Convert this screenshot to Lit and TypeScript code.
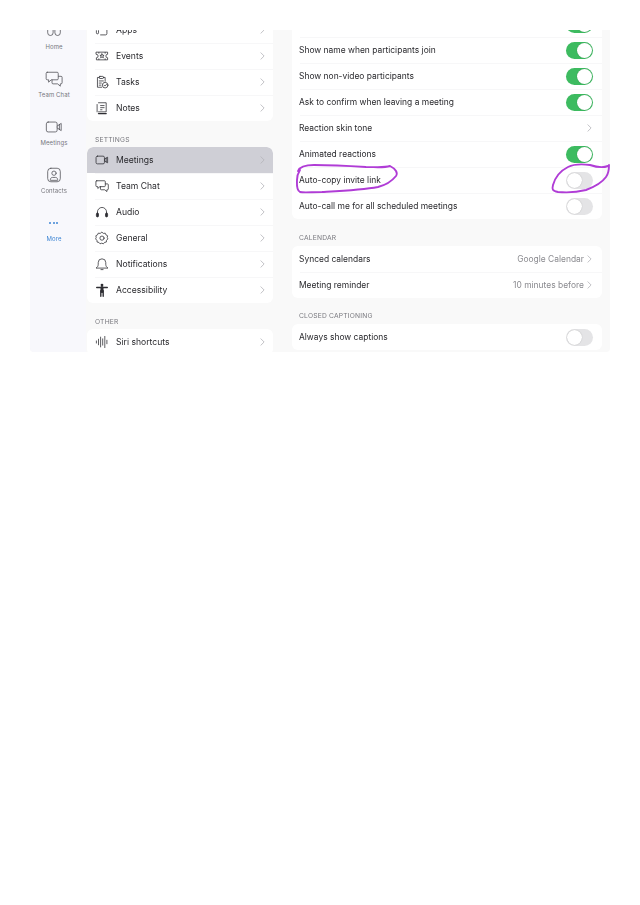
import { LitElement, html, css, svg } from 'lit';
import { customElement } from 'lit/decorators.js';

// 20x20 line icons used in the rail and in the settings list
const icons: Record<string, unknown> = {
  home: svg`<path d="M3 1v11a3 3 0 0 0 6 0V6a1 1 0 0 1 2 0v6a3 3 0 0 0 6 0V1"/>`,
  chat: svg`<path d="M2.5 2.5h11a1.2 1.2 0 0 1 1.2 1.2v6a1.2 1.2 0 0 1-1.2 1.2H7l-3 2.6v-2.6H2.5a1.2 1.2 0 0 1-1.2-1.2v-6a1.2 1.2 0 0 1 1.2-1.2z"/><path d="M15 7h2.8A1.2 1.2 0 0 1 19 8.2v6a1.2 1.2 0 0 1-1.2 1.2H17v2.6l-3-2.6H9a1.2 1.2 0 0 1-1.2-1.2V11"/>`,
  video: svg`<rect x="1.5" y="4.5" width="12" height="11" rx="2"/><path d="M13.5 9l4.5-3v8l-4.5-3"/><path d="M16 7v6"/>`,
  contact: svg`<rect x="3" y="2.5" width="14" height="15" rx="3.5"/><circle cx="10" cy="8" r="2.4"/><path d="M6 15.5v-.6c0-1.4 1.2-2.2 2.2-2.2h3.6c1 0 2.2.8 2.2 2.2v.6z"/>`,
  apps: svg`<path d="M2 11v3a1.5 1.5 0 0 0 3 0v-3"/><path d="M8 17h7a2 2 0 0 0 2-2V3"/>`,
  events: svg`<path d="M2 4.5h16v3a2.5 2.5 0 0 0 0 5v3H2v-3a2.5 2.5 0 0 0 0-5z"/><path d="M10 7l1 2h2l-1.6 1.4.6 2.1-2-1.2-2 1.2.6-2.1L7 9h2z"/><path d="M14.5 5v1M14.5 14v1M5.5 5v1M5.5 14v1"/>`,
  tasks: svg`<path d="M6 3.5H3.5v14h6"/><path d="M12 3.5h2.5V9"/><rect x="6" y="2" width="6" height="3" rx="1"/><path d="M6 8.5h6M6 11.5h3M6 14.5h2.5"/><circle cx="14.5" cy="14.5" r="4"/><path d="M12.8 14.5l1.3 1.3 2.3-2.4"/>`,
  notes: svg`<path d="M5 2.5h11v13H5"/><path d="M3 5v10.5"/><path d="M8 6.5h5M8 9.5h5M8 12.5h2"/><path d="M5 18h11" stroke-width="2"/>`,
  audio: svg`<path d="M3.5 12.5V10a6.5 6.5 0 0 1 13 0v2.5"/><rect x="2" y="11.5" width="3" height="5.5" rx="1.4" fill="currentColor"/><rect x="15" y="11.5" width="3" height="5.5" rx="1.4" fill="currentColor"/>`,
  general: svg`<path d="M10 1.8l2 1.6 2.6-.3 1 2.4 2.4 1.3-.5 2.6.9 1.9-1.9 1.9-.3 2.6-2.6.5-1.6 2-2.4-.9-2.4.9-1.6-2-2.6-.5-.3-2.6-1.9-1.9.9-1.9-.5-2.6 2.4-1.3 1-2.4 2.6.3z"/><circle cx="10" cy="10.2" r="3"/>`,
  bell: svg`<path d="M2 15.5c1.6-1.2 2.6-2.6 2.6-5.2V8a5.4 5.4 0 0 1 10.8 0v2.3c0 2.6 1 4 2.6 5.2z"/><path d="M8.5 18h3"/>`,
  access: svg`<circle cx="10" cy="3" r="2" fill="currentColor" stroke="none"/><path d="M2.5 6.5h15" stroke-width="2.2"/><path d="M10 6.5V12" stroke-width="4.4"/><path d="M8.3 11v8M11.7 11v8" stroke-width="2"/>`,
  siri: svg`<path d="M2 8.5v3M5 6v8M8 3v14M11 5.5v9M14 2v16M17 7.5v5"/>`,
};

const icon = (name: string) =>
  html`<svg class="icon" viewBox="0 0 20 20" fill="none" stroke="currentColor" stroke-width="1.1" stroke-linecap="round" stroke-linejoin="round">${icons[name]}</svg>`;

const chevron = html`<svg class="chev" viewBox="0 0 6 10" fill="none" stroke="currentColor" stroke-width="1" stroke-linecap="round" stroke-linejoin="round"><path d="M1 1l4 4-4 4"/></svg>`;

const toggle = (on: boolean) => html`<span class="toggle ${on ? 'on' : ''}"><span class="knob"></span></span>`;

const rail = [
  { icon: 'home', label: 'Home' },
  { icon: 'chat', label: 'Team Chat' },
  { icon: 'video', label: 'Meetings' },
  { icon: 'contact', label: 'Contacts' },
];

const navTop = [
  { icon: 'apps', label: 'Apps' },
  { icon: 'events', label: 'Events' },
  { icon: 'tasks', label: 'Tasks' },
  { icon: 'notes', label: 'Notes' },
];
const navSettings = [
  { icon: 'video', label: 'Meetings', active: true },
  { icon: 'chat', label: 'Team Chat' },
  { icon: 'audio', label: 'Audio' },
  { icon: 'general', label: 'General' },
  { icon: 'bell', label: 'Notifications' },
  { icon: 'access', label: 'Accessibility' },
];
const navOther = [{ icon: 'siri', label: 'Siri shortcuts' }];

type Row = { label: string; on?: boolean; value?: string };

const meetingRows: Row[] = [
  { label: '', on: true }, // scrolled away, only its toggle still shows
  { label: 'Show name when participants join', on: true },
  { label: 'Show non-video participants', on: true },
  { label: 'Ask to confirm when leaving a meeting', on: true },
  { label: 'Reaction skin tone' },
  { label: 'Animated reactions', on: true },
  { label: 'Auto-copy invite link', on: false },
  { label: 'Auto-call me for all scheduled meetings', on: false },
];
const calendarRows: Row[] = [
  { label: 'Synced calendars', value: 'Google Calendar' },
  { label: 'Meeting reminder', value: '10 minutes before' },
];
const captionRows: Row[] = [{ label: 'Always show captions', on: false }];

@customElement('app-root')
export class AppRoot extends LitElement {
  static styles = css`
    :host {
      display: block;
      height: 905px;
      background: #fff;
      font-family: Inter, 'Liberation Sans', sans-serif;
      color: #2a2a2e;
    }
    .page {
      position: relative;
      padding: 30px 30px 0;
      filter: blur(0.45px);
    }
    .frame {
      display: flex;
      height: 322px;
      background: #f9f9f9;
      border-radius: 0 0 4px 4px;
      overflow: hidden;
    }
    .rail {
      width: 56px;
      flex: none;
      box-sizing: border-box;
      padding-right: 8px;
      background: #f8f8fc;
      display: flex;
      flex-direction: column;
      align-items: center;
      margin-top: -8px;
    }
    .rail-item {
      height: 48px;
      flex: none;
      display: flex;
      flex-direction: column;
      align-items: center;
      color: #77777d;
      font-size: 6px;
      line-height: 8px;
      letter-spacing: 0.1px;
    }
    .rail-item .icon {
      width: 18px;
      height: 18px;
      margin-bottom: 3px;
      color: #55555b;
      stroke-width: 0.9;
    }
    .rail-item.more {
      color: #3f86d4;
    }
    .dots {
      height: 18px;
      margin-bottom: 3px;
      display: flex;
      gap: 1.5px;
      align-items: center;
    }
    .dots i {
      width: 2px;
      height: 2px;
      border-radius: 50%;
      background: #3f86d4;
    }
    .nav {
      width: 186px;
      flex: none;
      margin-left: 1px;
    }
    .main {
      width: 310px;
      flex: none;
      margin-left: 19px;
    }
    .card {
      background: #fff;
      border-radius: 6px;
      overflow: hidden;
    }
    .nav > .card:first-child {
      margin-top: -13px;
      border-radius: 0 0 6px 6px;
    }
    .main > .card:first-child {
      margin-top: -19px;
      border-radius: 0 0 6px 6px;
    }
    .section {
      height: 26px;
      box-sizing: border-box;
      display: flex;
      align-items: flex-end;
      font-size: 6.7px;
      line-height: 8px;
      letter-spacing: 0.2px;
      color: #77777d;
      text-transform: uppercase;
    }
    .nav .section {
      padding: 0 0 3.5px 8px;
    }
    .main .section {
      padding: 0 0 4px 7px;
    }
    .main .card:first-child + .section {
      height: 27px;
    }
    .row {
      height: 26px;
      box-sizing: border-box;
      display: flex;
      align-items: center;
      font-size: 8.6px;
      position: relative;
    }
    .nav .row {
      padding: 0 8px;
      gap: 7px;
    }
    .nav .row .icon {
      width: 14px;
      height: 14px;
      flex: none;
      color: #2e2e33;
    }
    .main .row {
      padding: 0 9px 0 7px;
      font-size: 8.45px;
    }
    .row + .row::before {
      content: '';
      position: absolute;
      top: 0;
      left: 8px;
      right: 0;
      height: 1px;
      background: #f7f7f8;
    }
    .row.active {
      background: #cfcfd6;
      border-radius: 6px 6px 0 0;
    }
    .label {
      flex: 1;
      white-space: nowrap;
    }
    .value {
      color: #8a8a8f;
      margin-right: 3px;
      white-space: nowrap;
    }
    .chev {
      width: 5px;
      height: 8px;
      flex: none;
      color: #b4b4b9;
      margin-right: 1px;
    }
    .nav .chev {
      margin-right: 0;
      margin-left: auto;
    }
    .toggle {
      width: 27px;
      height: 17px;
      flex: none;
      border-radius: 9px;
      background: #e4e4e6;
      display: flex;
      align-items: center;
      padding: 1px;
      box-sizing: border-box;
    }
    .toggle.on {
      background: #3dbb60;
      justify-content: flex-end;
    }
    .knob {
      width: 15px;
      height: 15px;
      border-radius: 50%;
      background: #fff;
      box-shadow: 0 0 1px rgba(0, 0, 0, 0.3);
    }
    .marks {
      position: absolute;
      left: 0;
      top: 0;
      width: 640px;
      height: 360px;
      pointer-events: none;
    }
  `;

  private navRow(item: { icon: string; label: string; active?: boolean }) {
    return html`<div class="row ${item.active ? 'active' : ''}">
      ${icon(item.icon)}<span class="label">${item.label}</span>${chevron}
    </div>`;
  }

  private mainRow(r: Row) {
    return html`<div class="row">
      <span class="label">${r.label}</span>
      ${r.value ? html`<span class="value">${r.value}</span>` : ''}
      ${r.on === undefined ? chevron : toggle(r.on)}
    </div>`;
  }

  render() {
    return html`
      <div class="page">
        <div class="frame">
          <div class="rail">
            ${rail.map(
              (r) => html`<div class="rail-item">${icon(r.icon)}<span>${r.label}</span></div>`,
            )}
            <div class="rail-item more"><div class="dots"><i></i><i></i><i></i></div><span>More</span></div>
          </div>
          <div class="nav">
            <div class="card">${navTop.map((i) => this.navRow(i))}</div>
            <div class="section">Settings</div>
            <div class="card">${navSettings.map((i) => this.navRow(i))}</div>
            <div class="section">Other</div>
            <div class="card">${navOther.map((i) => this.navRow(i))}</div>
          </div>
          <div class="main">
            <div class="card">${meetingRows.map((r) => this.mainRow(r))}</div>
            <div class="section">Calendar</div>
            <div class="card">${calendarRows.map((r) => this.mainRow(r))}</div>
            <div class="section">Closed captioning</div>
            <div class="card">${captionRows.map((r) => this.mainRow(r))}</div>
          </div>
        </div>
        <svg class="marks" viewBox="0 0 640 360" fill="none" stroke="#b03cd6" stroke-width="1.9" stroke-linecap="round" stroke-linejoin="round">
          <path d="M298 171C300 166 308 165 314 165C330 165 350 166 366 167C376 167 384 168 390 166C396 169 398 173 396 176C392 181 386 185 378 187C362 190 340 191 322 192C312 192 304 193 300 192C296 190 297 184 297 180C297 176 298 173 300 170"/>
          <path d="M608 166C603 168 596 167 590 165C582 164 574 164 568 167C560 171 555 178 553 185C552 189 552 191 558 192C568 193 578 192 586 190C594 187 601 184 606 177C609 173 609 169 609 165"/>
        </svg>
      </div>
    `;
  }
}
